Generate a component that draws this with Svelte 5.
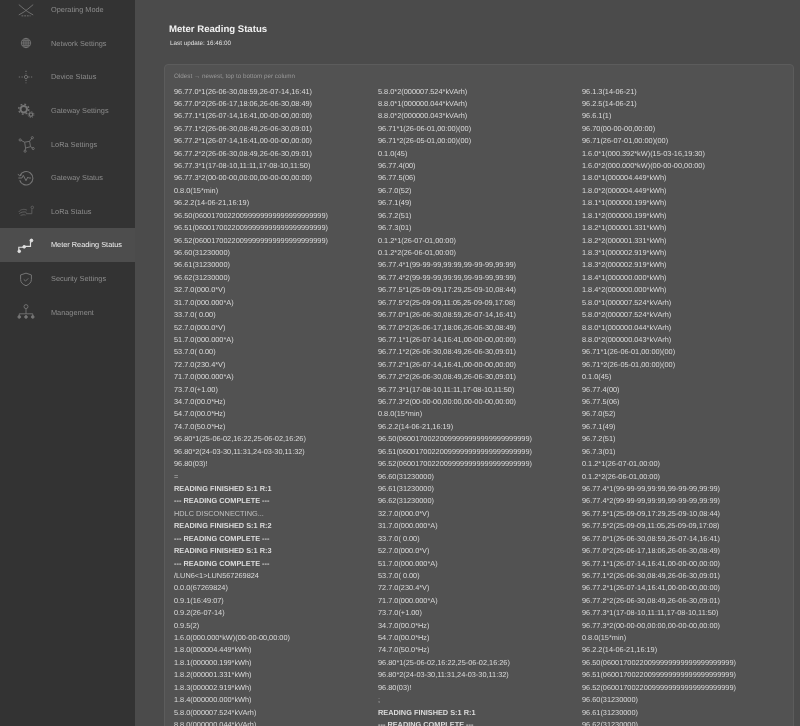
<script>
  const nav = [
    { id: 'mode', label: 'Operating Mode' },
    { id: 'globe', label: 'Network Settings' },
    { id: 'device', label: 'Device Status' },
    { id: 'gears', label: 'Gateway Settings' },
    { id: 'lora', label: 'LoRa Settings' },
    { id: 'pulse', label: 'Gateway Status' },
    { id: 'wave', label: 'LoRa Status' },
    { id: 'meter', label: 'Meter Reading Status', active: true },
    { id: 'shield', label: 'Security Settings' },
    { id: 'org', label: 'Management' }
  ];

  const profile = [
    '96.77.0*1(26-06-30,08:59,26-07-14,16:41)',
    '96.77.0*2(26-06-17,18:06,26-06-30,08:49)',
    '96.77.1*1(26-07-14,16:41,00-00-00,00:00)',
    '96.77.1*2(26-06-30,08:49,26-06-30,09:01)',
    '96.77.2*1(26-07-14,16:41,00-00-00,00:00)',
    '96.77.2*2(26-06-30,08:49,26-06-30,09:01)',
    '96.77.3*1(17-08-10,11:11,17-08-10,11:50)',
    '96.77.3*2(00-00-00,00:00,00-00-00,00:00)',
    '0.8.0(15*min)',
    '96.2.2(14-06-21,16:19)',
    '96.50(06001700220099999999999999999999)',
    '96.51(06001700220099999999999999999999)',
    '96.52(06001700220099999999999999999999)',
    '96.60(31230000)',
    '96.61(31230000)',
    '96.62(31230000)'
  ];
  const phases = [
    '32.7.0(000.0*V)',
    '31.7.0(000.000*A)',
    '33.7.0( 0.00)',
    '52.7.0(000.0*V)',
    '51.7.0(000.000*A)',
    '53.7.0( 0.00)',
    '72.7.0(230.4*V)',
    '71.7.0(000.000*A)',
    '73.7.0(+1.00)',
    '34.7.0(00.0*Hz)',
    '54.7.0(00.0*Hz)',
    '74.7.0(50.0*Hz)',
    '96.80*1(25-06-02,16:22,25-06-02,16:26)',
    '96.80*2(24-03-30,11:31,24-03-30,11:32)',
    '96.80(03)!'
  ];
  const tail = [
    '96.71*1(26-06-01,00:00)(00)',
    '96.71*2(26-05-01,00:00)(00)',
    '0.1.0(45)',
    '96.77.4(00)',
    '96.77.5(06)',
    '96.7.0(52)',
    '96.7.1(49)',
    '96.7.2(51)',
    '96.7.3(01)',
    '0.1.2*1(26-07-01,00:00)',
    '0.1.2*2(26-06-01,00:00)',
    '96.77.4*1(99-99-99,99:99,99-99-99,99:99)',
    '96.77.4*2(99-99-99,99:99,99-99-99,99:99)',
    '96.77.5*1(25-09-09,17:29,25-09-10,08:44)',
    '96.77.5*2(25-09-09,11:05,25-09-09,17:08)'
  ];
  const col1 = [
    ...profile, ...phases,
    '~=',
    '*READING FINISHED S:1 R:1',
    '*--- READING COMPLETE ---',
    '~HDLC DISCONNECTING...',
    '*READING FINISHED S:1 R:2',
    '*--- READING COMPLETE ---',
    '*READING FINISHED S:1 R:3',
    '*--- READING COMPLETE ---',
    '/LUN6<1>LUN567269824',
    '0.0.0(67269824)',
    '0.9.1(16:49:07)',
    '0.9.2(26-07-14)',
    '0.9.5(2)',
    '1.6.0(000.000*kW)(00-00-00,00:00)',
    '1.8.0(000004.449*kWh)',
    '1.8.1(000000.199*kWh)',
    '1.8.2(000001.331*kWh)',
    '1.8.3(000002.919*kWh)',
    '1.8.4(000000.000*kWh)',
    '5.8.0(000007.524*kVArh)',
    '8.8.0(000000.044*kVArh)'
  ];
  const col2 = [
    '5.8.0*2(000007.524*kVArh)',
    '8.8.0*1(000000.044*kVArh)',
    '8.8.0*2(000000.043*kVArh)',
    ...tail, ...profile, ...phases,
    '~;',
    '*READING FINISHED S:1 R:1',
    '*--- READING COMPLETE ---'
  ];
  const col3 = [
    '96.1.3(14-06-21)',
    '96.2.5(14-06-21)',
    '96.6.1(1)',
    '96.70(00-00-00,00:00)',
    '96.71(26-07-01,00:00)(00)',
    '1.6.0*1(000.392*kW)(15-03-16,19:30)',
    '1.6.0*2(000.000*kW)(00-00-00,00:00)',
    '1.8.0*1(000004.449*kWh)',
    '1.8.0*2(000004.449*kWh)',
    '1.8.1*1(000000.199*kWh)',
    '1.8.1*2(000000.199*kWh)',
    '1.8.2*1(000001.331*kWh)',
    '1.8.2*2(000001.331*kWh)',
    '1.8.3*1(000002.919*kWh)',
    '1.8.3*2(000002.919*kWh)',
    '1.8.4*1(000000.000*kWh)',
    '1.8.4*2(000000.000*kWh)',
    '5.8.0*1(000007.524*kVArh)',
    '5.8.0*2(000007.524*kVArh)',
    '8.8.0*1(000000.044*kVArh)',
    '8.8.0*2(000000.043*kVArh)',
    ...tail, ...profile
  ];
  const columns = [col1, col2, col3].map((c) =>
    c.map((t) => ({
      kind: t[0] === '*' ? 'strong' : t[0] === '~' ? 'dim' : 'plain',
      text: t[0] === '*' || t[0] === '~' ? t.slice(1) : t
    }))
  );
</script>

<div class="page">
  <aside class="side">
    {#each nav as item}
      <div class="item" class:active={item.active}>
        <svg class="icon icon-{item.id}" viewBox="0 0 20 20" fill="none" stroke="currentColor" stroke-width="1">
          {#if item.id === 'mode'}
            <path d="M2 4l6 5 4 3 6 3.500M18 4l-6 5-4 3-6 3.500" />
            <path d="M5 16.500h10" stroke-dasharray="2 1" />
          {:else if item.id === 'globe'}
            <circle cx="10" cy="10" r="5.200" />
            <path d="M4.800 10h10.400M5.600 7.500h8.800M5.600 12.500h8.800M10 4.800v10.400" />
            <ellipse cx="10" cy="10" rx="2.500" ry="5.200" />
          {:else if item.id === 'device'}
            <circle cx="10" cy="10" r="1.800" />
            <path d="M2 10h5.500M12.500 10h6M10 3v4M10 13v4" stroke-dasharray="1.400 1.600" stroke-width="1.200" />
          {:else if item.id === 'gears'}
            <circle cx="7.500" cy="8" r="3.600" stroke-width="2.200" />
            <circle cx="7.500" cy="8" r="5.600" stroke-width="1.600" stroke-dasharray="2 2.400" />
            <circle cx="15.500" cy="14" r="2" stroke-width="1.500" />
            <circle cx="15.500" cy="14" r="3.300" stroke-width="1" stroke-dasharray="1.300 1.300" />
          {:else if item.id === 'lora'}
            <path d="M4.500 6l4 2 5.500-1 1 6-5.500 1.500-1-6.500M14 7l2.500-3.500M15 13l2.500 1.500M9.500 14.500l-.5 2.500" />
            <circle cx="3.500" cy="5.500" r="1.200" /><circle cx="17" cy="3" r="1.200" />
            <circle cx="18" cy="15" r="1.200" /><circle cx="9" cy="18" r="1.200" />
          {:else if item.id === 'pulse'}
            <path d="M3.200 7.500A7.500 7.500 0 1 1 3 12.500" stroke-width="1.200" />
            <path d="M1.500 10h4l1.500-3 3 6 2-4 1 1h2.500" stroke-width="1.100" />
            <path d="M1 5.500l2 2.400 2.400-1.600" stroke-width="1" />
          {:else if item.id === 'wave'}
            <path d="M2 11c2-3 6-3.500 9-2M2.500 13c2-2 6-2.500 8-1.500M4 15c2-1 4-1 5.500-.5" stroke-width="1" />
            <path d="M10 13h6.500V8" stroke-width="1" />
            <circle cx="17" cy="6" r="1.400" />
          {:else if item.id === 'meter'}
            <path d="M2 16v-3.500h6.500v-1h6.500V6" stroke-width="1.300" />
            <circle cx="2.500" cy="17" r="1.500" fill="currentColor" />
            <circle cx="8" cy="12" r="1.500" fill="currentColor" />
            <circle cx="16" cy="5" r="1.600" fill="currentColor" />
          {:else if item.id === 'shield'}
            <path d="M10 3.500l6 2v5c0 3.500-2.500 5.500-6 7-3.500-1.500-6-3.500-6-7v-5z" stroke-width="1.100" />
            <path d="M7.500 10.500l2 1.800 3-3" stroke-width="1" />
          {:else if item.id === 'org'}
            <circle cx="10" cy="4" r="2.200" />
            <path d="M10 6.200v6M2.500 14.500v-2.500h15v2.500" />
            <circle cx="2.500" cy="15.500" r="1.500" fill="currentColor" />
            <circle cx="10" cy="15.500" r="1.500" fill="currentColor" />
            <circle cx="17.500" cy="15.500" r="1.500" fill="currentColor" />
          {/if}
        </svg>
        <span class="label">{item.label}</span>
      </div>
    {/each}
  </aside>

  <main class="main">
    <header class="head">
      <h1>Meter Reading Status</h1>
      <p class="update">Last update: 16:46:00</p>
    </header>
    <section class="panel">
      <p class="hint">Oldest → newest, top to bottom per column</p>
      <div class="cols">
        {#each columns as col}
          <div class="col">
            {#each col as row}
              <div class="row {row.kind}">{row.text}</div>
            {/each}
          </div>
        {/each}
      </div>
    </section>
  </main>
</div>

<style>
  :global(body) {
    margin: 0;
    background: #4b4b4b;
  }
  .page {
    display: flex;
    height: 726px;
    overflow: hidden;
    font-family: "Liberation Sans", Arial, sans-serif;
    text-rendering: geometricPrecision;
    filter: blur(0.3px);
  }
  .side {
    flex: 0 0 135px;
    background: #333;
  }
  .item {
    display: flex;
    align-items: center;
    height: 33.6px;
    padding-left: 16.500px;
    gap: 16.500px;
    font-size: 7.350px;
    color: #8c8c8c;
    box-sizing: border-box;
  }
  .item:first-child {
    margin-top: -7px;
  }
  .item.active {
    background: #4d4d4d;
    color: #f0f0f0;
  }
  .label {
    will-change: opacity;
  }
  .icon {
    width: 18px;
    height: 18px;
    flex: none;
    color: #757575;
  }
  .icon-wave {
    color: #626262;
  }
  .item.active .icon {
    color: #e0e0e0;
  }
  .main {
    flex: 1;
    min-width: 0;
    padding: 23px 6px 0 29px;
  }
  .head {
    padding-left: 5px;
  }
  h1 {
    margin: 0;
    font-size: 9.600px;
    line-height: 13px;
    font-weight: 700;
    color: #f2f2f2;
  }
  .update {
    margin: 2px 0 0 1px;
    font-size: 6.300px;
    line-height: 11px;
    color: #e0e0e0;
  }
  .panel {
    margin-top: 15px;
    height: 700px;
    box-sizing: border-box;
    background: #525252;
    border: 1px solid #5c5c5c;
    border-radius: 4px;
    padding: 6px 9px 0;
  }
  .hint {
    margin: 0 0 2.500px;
    font-size: 6.300px;
    line-height: 12px;
    color: #999;
  }
  .cols {
    display: grid;
    grid-template-columns: repeat(3, 204px);
  }
  .row {
    font-size: 7.350px;
    line-height: 12.420px;
    color: #dcdcdc;
    white-space: pre;
  }
  .row.strong {
    font-weight: 700;
  }
  .row.dim {
    color: #c0c0c0;
  }
</style>
